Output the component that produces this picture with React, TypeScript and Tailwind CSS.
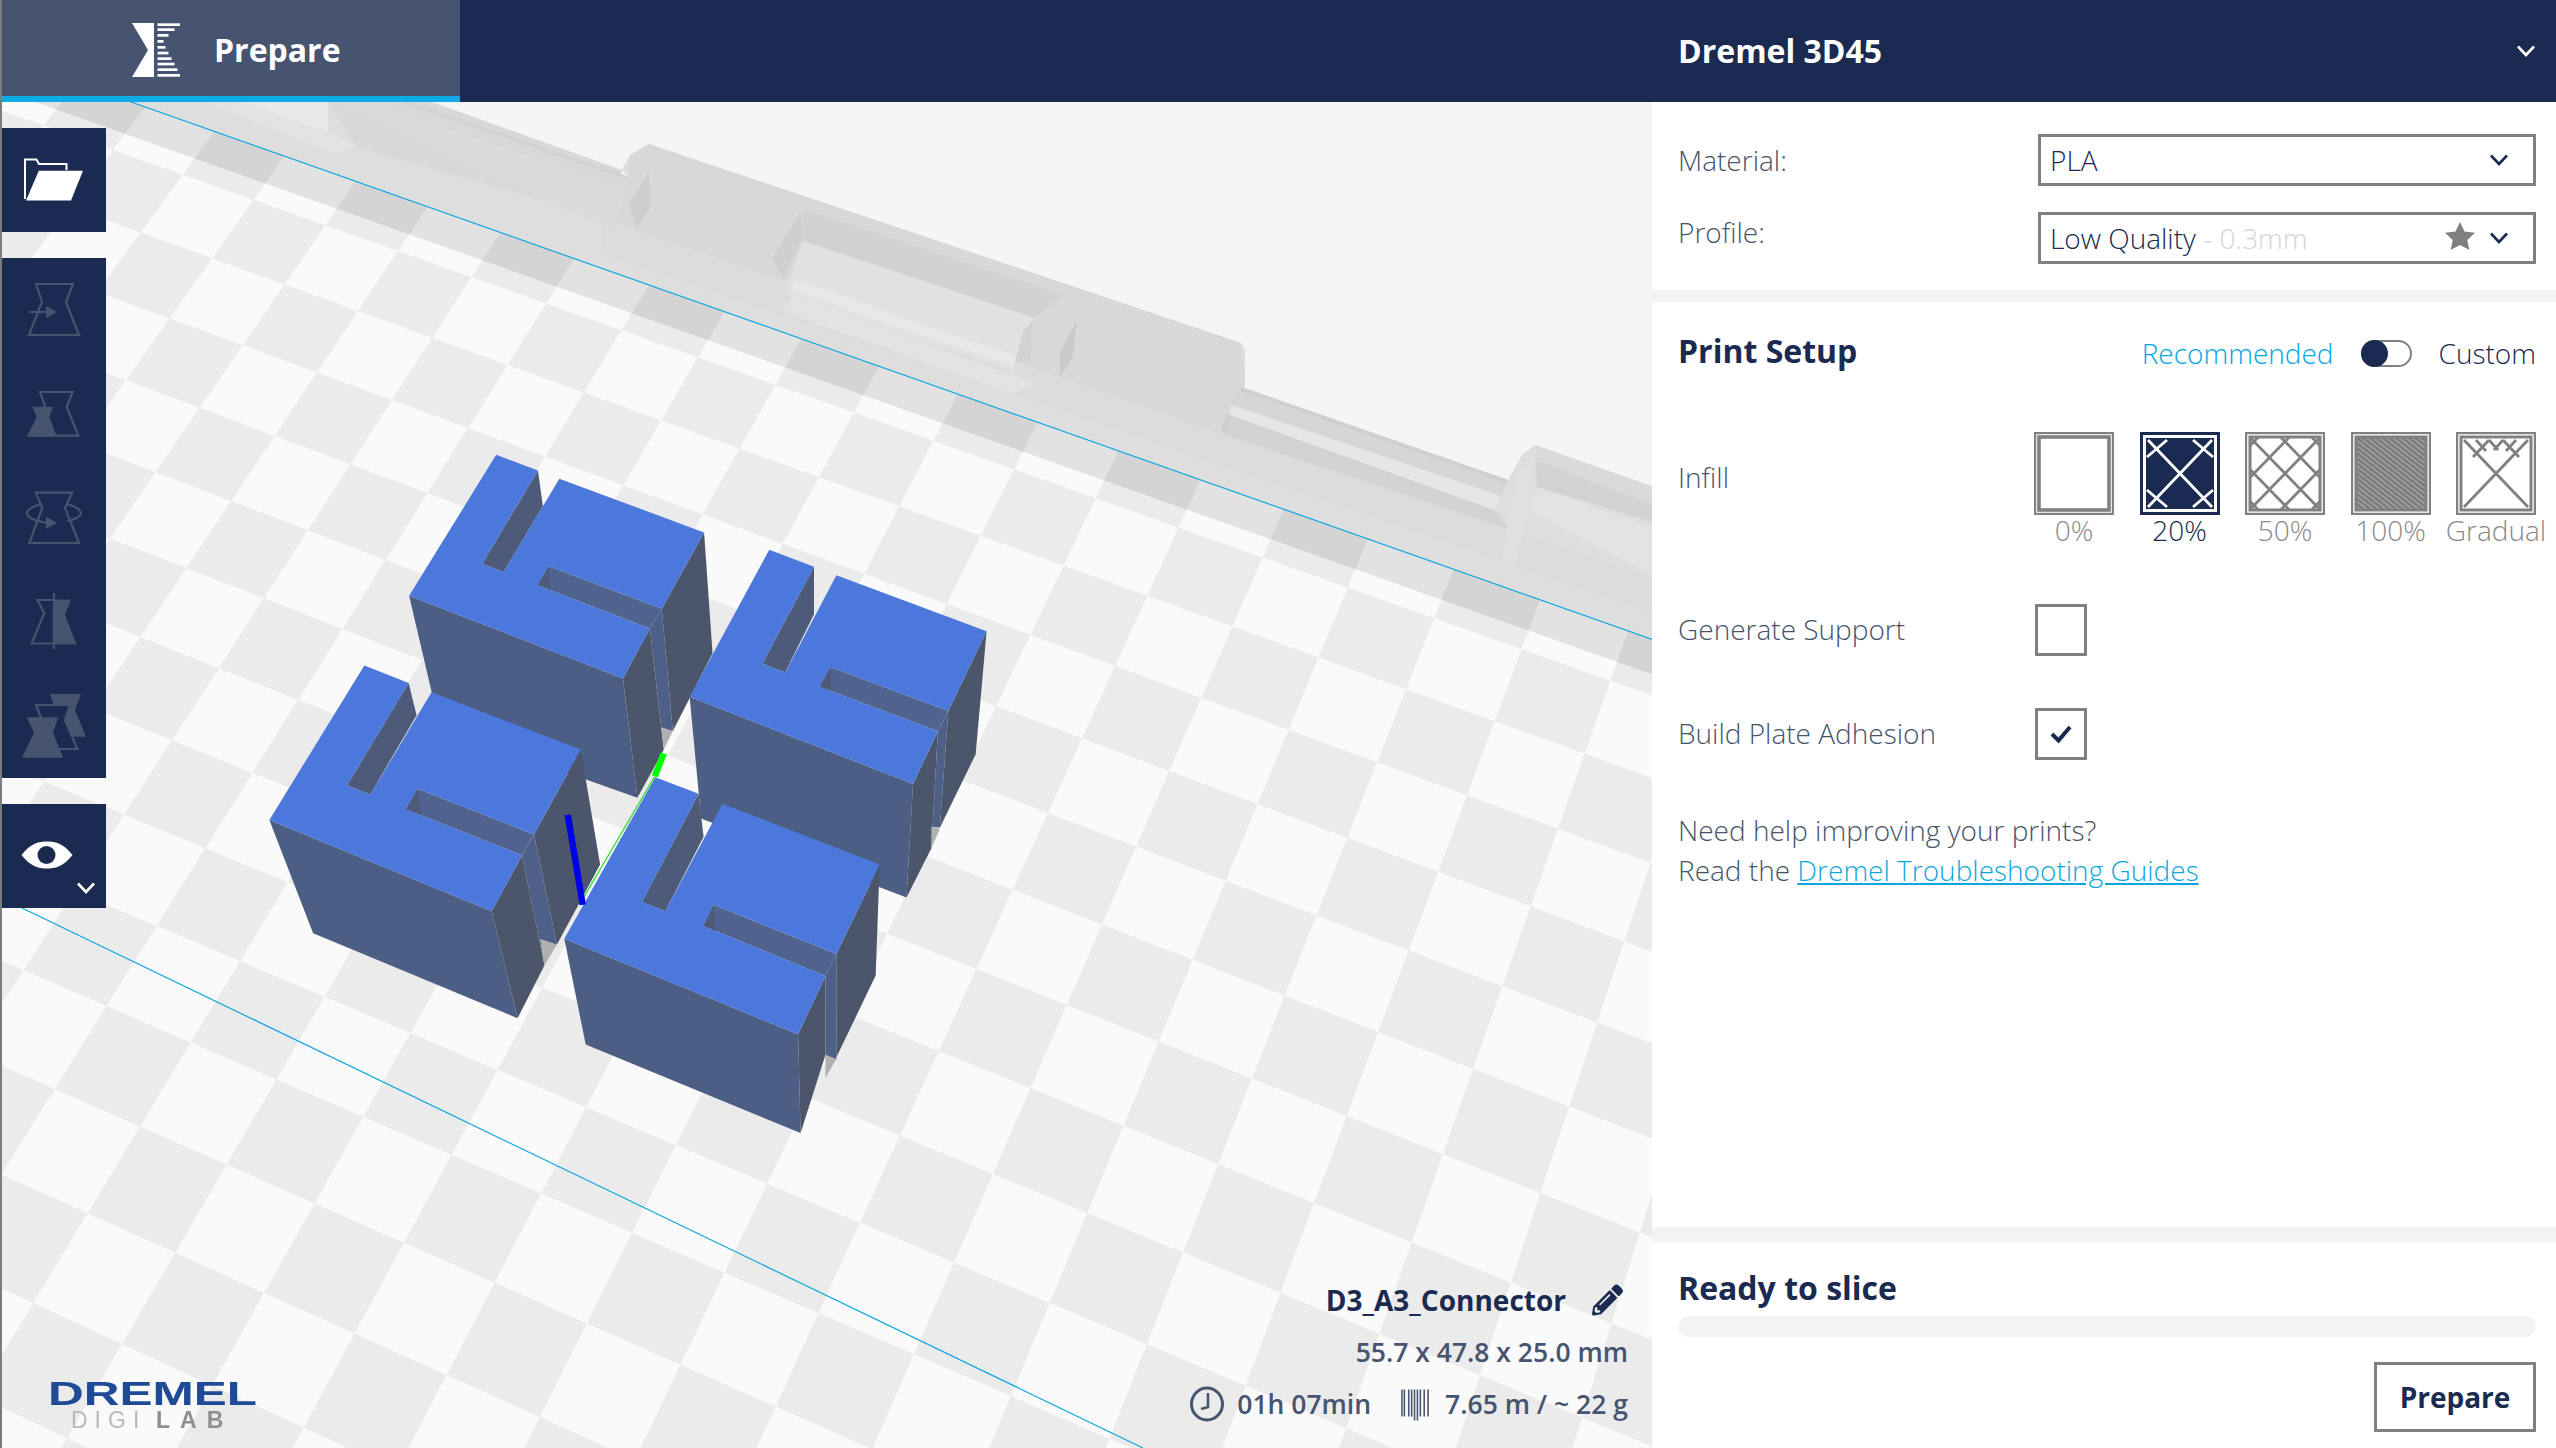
import { FaPencilAlt } from "react-icons/fa";

const NAVY = "#1a2a50";
const SLATE = "#46546f";

// corners of the floor grid read off the screenshot: [u, v, x, y]
const gridCorners = [
  [0, 0, 1145, 597],
  [5, 0, 1582.8, 754],
  [0, 8, 858, 1222],
  [5, 6, 1410.7, 1241],
  [-3, 0, 897, 506],
  [-9, 0, 430.6, 338],
  [-9, 2, 348, 464.5],
  [-13, -1, 181, 174],
  [-3, 8, 583, 1107],
  [-3, 11, 444, 1376],
  [-8, 8, 155, 926],
  [-8, 10, 53.6, 1089],
  [1, 8, 951.7, 1263],
];

// least squares fit of the floor homography
function fitHomography(points: number[][]) {
  const rows: number[][] = [];
  points.forEach(([u, v, x, y]) => {
    rows.push([u, v, 1, 0, 0, 0, -u * x, -v * x, x]);
    rows.push([0, 0, 0, u, v, 1, -u * y, -v * y, y]);
  });
  const m: number[][] = [];
  for (let i = 0; i < 8; i++) {
    m.push([]);
    for (let j = 0; j < 9; j++) {
      m[i].push(rows.reduce((s, r) => s + r[i] * r[j], 0));
    }
  }
  for (let c = 0; c < 8; c++) {
    let p = c;
    for (let r = c + 1; r < 8; r++) if (Math.abs(m[r][c]) > Math.abs(m[p][c])) p = r;
    [m[c], m[p]] = [m[p], m[c]];
    for (let r = 0; r < 8; r++) {
      if (r === c) continue;
      const f = m[r][c] / m[c][c];
      for (let k = c; k < 9; k++) m[r][k] -= f * m[c][k];
    }
  }
  return m.map((row, i) => row[8] / row[i]);
}

const H = fitHomography(gridCorners);

const project = (u: number, v: number) => {
  const w = H[6] * u + H[7] * v + 1;
  return `${((H[0] * u + H[1] * v + H[2]) / w).toFixed(1)},${((H[3] * u + H[4] * v + H[5]) / w).toFixed(1)}`;
};

const grayCells: string[] = [];
for (let u = -20; u < 12; u++) {
  for (let v = -6; v < 16; v++) {
    if (Math.abs(u + v) % 2 === 1) {
      grayCells.push([project(u, v), project(u + 1, v), project(u + 1, v + 1), project(u, v + 1)].join(" "));
    }
  }
}

const TOP = "#4c78db";
const FRONT = "#4d5e84";
const DARK = "#4c566b";
const INNER = "#50638f";
const SHADOW = "#b0b0b0";

const blocks = [
  {
    front: "338,385 768,565 797,825 400,672",
    notch: "768,565 822,456 850,720 797,825",
    strip: "822,456 846,413 868,680 845,672 850,720",
    side: "846,413 931,247 948,510 868,680",
    shadow: "845,672 868,680 850,720",
    slot: "597,112 607,190 528,333 485,315",
    recess: "618,320 846,413 822,456 596,362",
    recessEnd: "618,320 622,372 596,362",
    top: "513,78 597,112 485,315 528,333 640,130 931,247 846,413 618,320 596,362 822,456 768,565 338,385",
  },
  {
    front: "902,605 1351,795 1338,1042 925,870",
    notch: "1351,795 1401,680 1388,935 1338,1042",
    strip: "1401,680 1422,636 1405,890 1388,888 1388,935",
    side: "1422,636 1499,462 1477,730 1405,890",
    shadow: "1388,888 1405,893 1388,935",
    slot: "1152,322 1152,425 1094,552 1048,533",
    recess: "1185,540 1422,636 1401,680 1163,583",
    recessEnd: "1185,540 1186,592 1163,583",
    top: "1062,285 1152,322 1048,533 1094,552 1197,340 1499,462 1422,636 1185,540 1163,583 1401,680 1351,795 902,605",
  },
  {
    front: "57,873 504,1072 556,1305 145,1120",
    notch: "504,1072 565,950 610,1190 556,1305",
    strip: "565,950 589,905 635,1145 602,1133 610,1190",
    side: "589,905 683,720 722,970 635,1145",
    shadow: "602,1133 635,1145 610,1190",
    slot: "337,575 353,645 260,818 213,798",
    recess: "355,805 589,905 565,950 331,850",
    recessEnd: "355,805 362,863 331,850",
    top: "248,537 337,575 213,798 260,818 383,595 683,720 589,905 355,805 331,850 565,950 504,1072 57,873",
  },
  {
    front: "650,1132 1120,1340 1125,1555 693,1362",
    notch: "1120,1340 1175,1213 1175,1385 1125,1555",
    strip: "1175,1213 1197,1165 1197,1395 1175,1385",
    side: "1197,1165 1284,970 1276,1212 1197,1390",
    shadow: "1175,1385 1197,1393 1175,1435",
    slot: "920,816 930,910 853,1072 806,1052",
    recess: "950,1058 1197,1165 1175,1213 929,1104",
    recessEnd: "950,1058 954,1115 929,1104",
    top: "833,780 920,816 806,1052 853,1072 968,838 1284,970 1197,1165 950,1058 929,1104 1175,1213 1120,1340 650,1132",
  },
];

// the ghost of the model standing in the disallowed area
const ghost: [string, string][] = [
  ["129,102 408,102 627,177 620,170 628,155 647,144 1239,343 1243,350 1243,385 1239,387 1506,480 1520,455 1533,445 1652,487 1652,640", "#dedede"],
  ["408,102 628,177 600,218 340,102", "#d9d9d9"],
  ["647,144 1239,343 1243,385 1220,434 600,218 627,177 628,155", "#d8d8d8"],
  ["600,218 1220,434 1512,532 1652,580 1652,612 600,253", "#dcdcdc"],
  ["801,209 1061,295 1033,318 801,241", "#d1d1d1"],
  ["801,241 1033,318 1011,372 782,293", "#e1e1e1"],
  ["793,280 1014,356 1011,366 789,290", "#e8e8e8"],
  ["779,311 1009,393 1033,384 793,295", "#e3e3e3"],
  ["1239,387 1506,480 1499,496 1229,405", "#d6d6d6"],
  ["1229,405 1499,496 1492,510 1225,414", "#e6e6e6"],
  ["1225,414 1492,510 1509,530 1220,434", "#d2d2d2"],
  ["1533,445 1652,487 1652,505 1533,460", "#dadada"],
  ["1533,460 1652,505 1652,522 1535,487", "#d2d2d2"],
  ["1535,487 1652,528 1652,575 1527,510", "#e3e3e3"],
  ["1516,470 1535,460 1525,520 1512,568 1500,560", "#e0e0e0"],
  ["239,102 326,132 326,102", "#e8e8e8"],
  ["204,102 332,153 355,147 326,132 239,102", "#e3e3e3"],
  ["326,102 430,102 620,170 604,218 355,147", "#d8d8d8"],
  ["370,102 626,190 612,228 520,190 340,102", "#dbdbdb"],
  ["647,171 649,207 635,228 627,205", "#cecece"],
  ["799,211 801,239 781,278 770,259", "#cfcfcf"],
  ["1075,320 1071,357 1058,377 1058,353", "#cacaca"],
  ["1022,330 1031,320 1028,362 1013,362", "#d2d2d2"],
  ["1239,387 1232,400 1222,432 1219,430", "#cbcbcb"],
  ["408,102 628,177 624,179 398,102", "#d2d2d2"],
  ["1239,387 1506,480 1506,484 1239,391", "#cfcfcf"],
];

function Scene() {
  return (
    <svg className="absolute inset-0 w-full h-full" viewBox="0 102 1650 1346">
      <rect x="0" y="102" width="1652" height="1346" fill="#fafafa" />
      {grayCells.map((p) => (
        <polygon key={p} points={p} fill="#ebebeb" />
      ))}
      {/* nothing behind the plate */}
      <polygon points="0,102 1652,102 1652,490 1533,445 1520,455 1506,480 1239,387 1243,385 1243,350 1239,343 647,144 628,155 620,170 627,177 408,102" fill="#f5f5f5" />
      {/* disallowed area, see-through, the cells only show below the blue line */}
      <polygon points="33,102 129,102 1652,640 1652,675" fill="#000" fillOpacity="0.095" />
      {ghost.map(([points, fill]) => (
        <polygon key={points} points={points} fill={fill} />
      ))}
      {/* build volume outline */}
      <line x1="129" y1="102" x2="1652" y2="640" stroke="#0fa6e0" strokeWidth="1.2" />
      <line x1="20" y1="908" x2="1141" y2="1448" stroke="#0fa6e0" strokeWidth="1.2" />
      {/* the four connectors, in the order they overlap */}
      <g transform="translate(239 419) scale(0.4974 0.4592)">
        {blocks.map((b, i) => (
          <g key={i}>
            <polygon points={b.front} fill={FRONT} />
            <polygon points={b.strip} fill="#4f6088" />
            <polygon points={b.notch} fill={DARK} />
            <polygon points={b.side} fill={DARK} />
            <polygon points={b.shadow} fill={SHADOW} />
            <polygon points={b.slot} fill="#4d5a78" />
            <polygon points={b.recess} fill={INNER} />
            <polygon points={b.recessEnd} fill="#4d5a78" />
            <polygon points={b.top} fill={TOP} />
          </g>
        ))}
        <line x1="832" y1="778" x2="690" y2="1040" stroke="#22e022" strokeWidth="2.5" />
        <line x1="850" y1="728" x2="832" y2="778" stroke="#00ff00" strokeWidth="13" />
        <line x1="657" y1="862" x2="687" y2="1058" stroke="#0000e8" strokeWidth="13" />
      </g>
    </svg>
  );
}

function PrepareLogo() {
  const bars = [
    [23.3, 23], [28.3, 17], [34, 11], [40, 6], [46, 8], [51.7, 11], [57.3, 14], [62.7, 17], [68.3, 20], [74, 23],
  ];
  return (
    <svg width="48" height="54" viewBox="132 23 48 54" fill="#fff">
      <polygon points="132,23 154,23 154,77 132,77 148,50" />
      {bars.map(([y, w]) => (
        <rect key={y} x="157.5" y={y} width={w} height="2.7" />
      ))}
    </svg>
  );
}

function Chevron({ className, color = NAVY }: { className?: string; color?: string }) {
  return (
    <svg className={className} width="20" height="14" viewBox="0 0 20 14" fill="none">
      <path d="M2 2.5 L10 11 L18 2.5" stroke={color} strokeWidth="2.6" />
    </svg>
  );
}

function FolderIcon() {
  return (
    <svg width="60" height="44" viewBox="0 0 60 44" fill="none">
      <path d="M1 41 V1.5 H12.5 L15 6 H42.5 V12" stroke="#fff" strokeWidth="2" />
      <polygon points="14.8,12.7 59,12.7 47,42.5 2,42.5" fill="#fff" />
    </svg>
  );
}

function ToolIcon({ n }: { n: number }) {
  const c = SLATE;
  return (
    <svg width="60" height="60" viewBox="0 0 60 60" fill="none" className="overflow-visible">
      {n === 0 && (
        <g>
          <polygon points="12,4 49,4 42,22 55,55 5,55 18,22" stroke={c} strokeWidth="2.2" />
          <path d="M5 32 H23" stroke={c} strokeWidth="2.2" />
          <polygon points="22,26 33,32 22,38" fill={c} />
        </g>
      )}
      {n === 1 && (
        <g>
          <polygon points="16,8 48.7,8 42.7,22.7 54.3,51.7 4.3,51.7 21,22" stroke={c} strokeWidth="2.2" />
          <polygon points="8.3,22.7 29.3,22.7 25.3,32.7 32.7,52.5 4.3,52.5 12.7,32.7" fill={c} />
        </g>
      )}
      {n === 2 && (
        <g>
          <polygon points="11.7,4.7 48.3,4.7 41,20 55,55 5.3,55 18.3,20" stroke={c} strokeWidth="2.2" />
          <path d="M18 16 C8 18 3 22 3 25 C3 30 12 33 23 35 M42 16 C52 18 57 22 57 25 C57 28 50 32 43 33" stroke={c} strokeWidth="2.2" />
          <polygon points="22,28.7 33.3,34.7 22,41" fill={c} />
        </g>
      )}
      {n === 3 && (
        <g>
          <polygon points="13.3,8 30,8 30,51.5 7.7,51.5 20.3,21" stroke={c} strokeWidth="2.2" />
          <polygon points="30,7.5 47,7.5 41,23 52.7,52.5 30,52.5" fill={c} />
          <path d="M30 1 V57" stroke={c} strokeWidth="2.2" />
        </g>
      )}
      {n === 4 && (
        <g>
          <polygon points="26,-2 57,-2 51,14 62,40.7 40,40.7" fill={c} />
          <polygon points="12,9 46,9 41,24 53.3,53 25,53 18,24" fill={NAVY} stroke={c} strokeWidth="2.2" />
          <polygon points="2.7,21.3 34.3,21.3 29,37 39.3,61.7 -2,61.7 10,37" fill={c} />
        </g>
      )}
    </svg>
  );
}

function InfillIcon({ id, selected }: { id: string; selected?: boolean }) {
  const line = selected ? "#fff" : "#808080";
  let paths = "";
  if (id === "20") {
    paths = "M8 8 L72 75 M72 8 L8 75 M27 8 L7 25 M53 8 L73 25 M7 58 L27 75 M73 58 L53 75";
  } else if (id === "50") {
    for (const s of [-62, -31, 0, 31, 62]) {
      paths += ` M${s - 10} -10 L${s + 90} 93 M${90 + s} -10 L${s - 10} 93`;
    }
  } else if (id === "gradual") {
    paths = "M8 8 L72 75 M72 8 L8 75 M33 8 L17 25 M47 8 L63 25 M20 8 L30 19 M60 8 L50 19 M33 8 L42 18 M47 8 L38 18";
  }
  return (
    <svg width="80" height="83" viewBox="0 0 80 83">
      <defs>
        <clipPath id={`infill-${id}`}>
          <rect x="6" y="6" width="68" height="71" />
        </clipPath>
        <pattern id="hatch" width="4" height="4" patternUnits="userSpaceOnUse" patternTransform="rotate(38)">
          <rect width="4" height="4" fill="#a0a0a0" />
          <rect width="4" height="2.2" fill="#787878" />
        </pattern>
      </defs>
      {selected ? (
        <g>
          <rect width="80" height="83" fill={NAVY} />
          <rect x="4.5" y="4.5" width="71" height="74" fill={NAVY} stroke="#fff" strokeWidth="3" />
        </g>
      ) : (
        <g>
          <rect x="1" y="1" width="78" height="81" fill="#fff" stroke="#808080" strokeWidth="2.4" />
          <rect x="5" y="5" width="70" height="73" fill={id === "100" ? "url(#hatch)" : "#fff"} stroke="#808080" strokeWidth={id === "0" ? 3.6 : 3} />
        </g>
      )}
      <path d={paths} clipPath={`url(#infill-${id})`} stroke={line} strokeWidth="2.8" fill="none" />
    </svg>
  );
}

function DremelLogo() {
  return (
    <div className="w-[209px] flex flex-col font-['Liberation_Sans',sans-serif] blur-[0.6px] whitespace-nowrap">
      <span className="h-[30px] leading-[30px] origin-left scale-x-[1.5] text-[33px] font-bold text-[#1f4a96]">DREMEL</span>
      <div className="h-[22px] leading-[22px] ml-[23px] flex text-[23px]">
        <span className="w-[85px] tracking-[7px] text-[#b8b8b8]">DIGI</span>
        <span className="tracking-[10px] font-bold text-[#8f8f8f]">LAB</span>
      </div>
    </div>
  );
}

const levels = [
  { id: "0", label: "0%" },
  { id: "20", label: "20%", selected: true },
  { id: "50", label: "50%" },
  { id: "100", label: "100%" },
  { id: "gradual", label: "Gradual" },
];

export default function App() {
  return (
    <div className="w-[2556px] h-[1448px] flex flex-col overflow-hidden border-l-2 border-[#7d7d7d] bg-white font-['Open_Sans',sans-serif] text-[28px] text-[#47536b]">
      <header className="h-[102px] shrink-0 flex bg-[#1a2a50] text-white">
        <div className="w-[458px] h-full flex items-center gap-[34px] pl-[130px] pt-[4px] bg-[#46546f] border-b-[6px] border-[#0fabe6]">
          <PrepareLogo />
          <span className="text-[32px] font-bold">Prepare</span>
        </div>
        <div className="flex-1 flex items-center justify-between pl-[1218px] pr-[20px]">
          <span className="text-[32px] font-bold whitespace-nowrap">Dremel 3D45</span>
          <Chevron color="#fff" />
        </div>
      </header>

      <div className="flex-1 flex min-h-0">
        <main className="relative w-[1650px] shrink-0 overflow-hidden">
          <Scene />
          <div className="absolute left-0 top-[26px] w-[104px] flex flex-col">
            <button className="h-[104px] flex items-center justify-center bg-[#1a2a50]">
              <FolderIcon />
            </button>
            <div className="mt-[26px] flex flex-col bg-[#1a2a50]">
              {[0, 1, 2, 3, 4].map((n) => (
                <div key={n} className="h-[104px] flex items-center justify-center">
                  <ToolIcon n={n} />
                </div>
              ))}
            </div>
            <button className="relative mt-[26px] h-[104px] flex items-center justify-center bg-[#1a2a50]">
              <svg width="52" height="28" viewBox="0 0 52 28" className="-ml-[14px] -mt-[2px]">
                <path d="M0.5 14 C10 2 18 0.5 26 0.5 C34 0.5 42 2 51.5 14 C42 26 34 27.5 26 27.5 C18 27.5 10 26 0.5 14 Z" fill="#fff" />
                <circle cx="25.5" cy="14" r="9" fill="#1a2a50" />
              </svg>
              <Chevron color="#fff" className="absolute right-[10px] bottom-[13px]" />
            </button>
          </div>

          <div className="absolute left-[46px] bottom-[17px]">
            <DremelLogo />
          </div>

          <div className="absolute right-[24px] bottom-[24px] flex flex-col items-end gap-[12px] text-[#46546f] font-semibold text-[26.5px] leading-[40px]">
            <div className="flex items-center gap-[26px] pr-[5px] text-[28px] text-[#1a2a50] font-bold">
              <span>D3_A3_Connector</span>
              <FaPencilAlt className="w-[31px] h-[32px]" />
            </div>
            <div>55.7 x 47.8 x 25.0 mm</div>
            <div className="flex items-center">
              <svg width="34" height="36" viewBox="0 0 34 36" fill="none" stroke="#46546f" className="mr-[13px]">
                <ellipse cx="17" cy="18" rx="15.5" ry="16" strokeWidth="3" />
                <path d="M18 7 V21 L11 23" strokeWidth="2.6" />
              </svg>
              <span>01h 07min</span>
              <svg width="29" height="34" viewBox="0 0 30 34" stroke="#46546f" strokeWidth="1.6" className="ml-[30px] mr-[15px]">
                <path d="M1 2 V30 M3.5 2 V30 M8 2 V30 M11 2 V30 M14 2 V34 M17 2 V34 M20 2 V30 M24 2 V30 M28 2 V30" />
              </svg>
              <span>7.65 m / ~ 22 g</span>
            </div>
          </div>
        </main>

        <aside className="w-[904px] shrink-0 flex flex-col">
          <section className="h-[188px] shrink-0 pl-[26px] pr-[20px] pt-[32px] flex flex-col gap-[26px]">
            <div className="flex items-center justify-between">
              <span className="font-light">Material:</span>
              <div className="w-[498px] h-[52px] flex items-center justify-between pl-[9px] pr-[24px] border-[3px] border-[#808080] text-[#1a2a50]">
                <span className="font-light">PLA</span>
                <Chevron />
              </div>
            </div>
            <div className="flex items-center justify-between">
              <span className="font-light -mt-[12px]">Profile:</span>
              <div className="w-[498px] h-[52px] flex items-center pl-[9px] pr-[24px] border-[3px] border-[#808080] text-[#1a2a50]">
                <span className="font-light flex-1">
                  Low Quality <span className="text-[#d5d5d5]">- 0.3mm</span>
                </span>
                <svg width="30" height="28" viewBox="0 0 30 28" className="mr-[14px] -mt-[4px]">
                  <polygon points="15,0 19.5,9.5 30,10.8 22.3,18 24.3,28 15,23 5.7,28 7.7,18 0,10.8 10.5,9.5" fill="#808080" />
                </svg>
                <Chevron />
              </div>
            </div>
          </section>

          <div className="h-[12px] shrink-0 bg-[#f3f3f3]" />

          <section className="h-[925px] shrink-0 pl-[26px] pr-[20px] pt-[23px] flex flex-col">
            <div className="h-[52px] flex items-center justify-between">
              <h2 className="text-[32px] font-bold text-[#1a2a50]">Print Setup</h2>
              <div className="flex items-center pt-[4px]">
                <span className="font-light text-[#00a5e5]">Recommended</span>
                <div className="ml-[27px] w-[51px] h-[27px] rounded-full border-2 border-[#808080]">
                  <div className="-ml-[2px] -mt-[2px] w-[27px] h-[27px] rounded-full bg-[#1a2a50]" />
                </div>
                <span className="ml-[27px] font-light text-[#1a2a50]">Custom</span>
              </div>
            </div>

            <div className="mt-[55px] flex">
              <span className="w-[357px] pt-[24px] font-light">Infill</span>
              <div className="flex gap-[25.5px]">
                {levels.map((l) => (
                  <div key={l.id} className="w-[80px] flex flex-col items-center">
                    <InfillIcon id={l.id} selected={l.selected} />
                    <span className={`-mt-[3px] h-[36px] text-[28px] leading-[36px] font-light whitespace-nowrap ${l.selected ? "text-[#1a2a50]" : "text-[#8a8a8a]"}`}>
                      {l.label}
                    </span>
                  </div>
                ))}
              </div>
            </div>

            <div className="mt-[56px] flex items-center">
              <span className="w-[357px] -mt-[2px] font-light">Generate Support</span>
              <div className="w-[52px] h-[52px] border-[3px] border-[#808080]" />
            </div>
            <div className="mt-[52px] flex items-center">
              <span className="w-[357px] -mt-[2px] font-light">Build Plate Adhesion</span>
              <div className="w-[52px] h-[52px] flex items-center justify-center border-[3px] border-[#808080]">
                <svg width="24" height="20" viewBox="0 0 24 20" fill="none">
                  <path d="M3 10 L9.5 16.5 L21 3" stroke="#1a2a50" strokeWidth="4" />
                </svg>
              </div>
            </div>

            <p className="mt-[50px] font-light leading-[40px]">
              Need help improving your prints?
              <br />
              Read the <a className="text-[#0fa6e0] underline">Dremel Troubleshooting Guides</a>
            </p>
          </section>

          <div className="h-[15px] shrink-0 bg-[#f3f3f3]" />

          <section className="flex-1 pl-[26px] pr-[20px] pt-[26px] flex flex-col">
            <h2 className="text-[32px] leading-[40px] font-bold text-[#1a2a50]">Ready to slice</h2>
            <div className="mt-[8px] h-[21px] rounded-full bg-[#f3f3f3]" />
            <button className="mt-[25px] self-end w-[162px] h-[70px] border-[3px] border-[#808080] text-[28px] font-bold text-[#1a2a50]">
              Prepare
            </button>
          </section>
        </aside>
      </div>
    </div>
  );
}
